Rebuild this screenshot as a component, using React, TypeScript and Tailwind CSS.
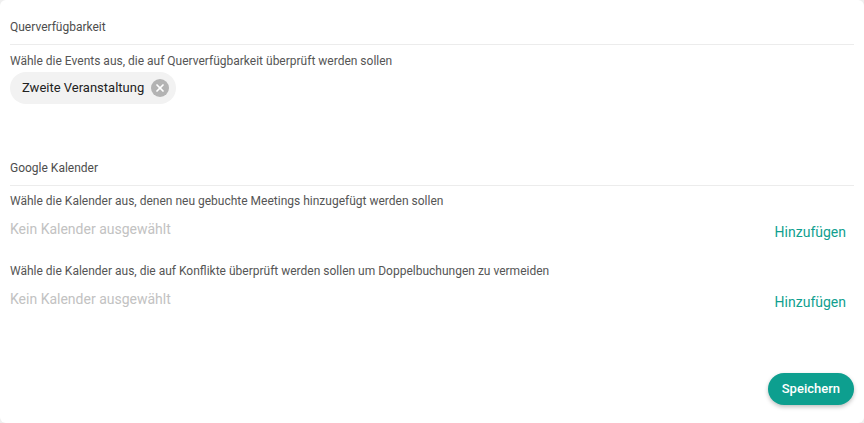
import { X } from 'lucide-react';

function SectionTitle({ children }: { children: string }) {
  return (
    <div className="border-b border-[#ececec] pb-2 text-[12px] leading-[18px] text-[#4d4d4d]">
      {children}
    </div>
  );
}

function CalendarRow({ label }: { label: string }) {
  return (
    <>
      <div className="text-[12px] leading-[16px] text-[#555]">{label}</div>
      <div className="mt-[10px] flex items-start justify-between">
        <span className="text-[14px] leading-[20px] text-[#c2c2c2]">Kein Kalender ausgewählt</span>
        <button className="mt-[3px] px-2 text-[14px] leading-[20px] text-[#0f9f8f]">Hinzufügen</button>
      </div>
    </>
  );
}

export default function App() {
  return (
    <div className="h-[423px] w-[864px] bg-[#efefef] font-['Roboto',sans-serif]">
      <div className="flex h-full flex-col rounded-md bg-white px-[10px] pt-[18px]">
        <SectionTitle>Querverfügbarkeit</SectionTitle>
        <div className="mt-[8px] text-[12px] leading-[16px] text-[#555]">
          Wähle die Events aus, die auf Querverfügbarkeit überprüft werden sollen
        </div>
        <div className="mt-[3px] flex">
          <div className="flex h-8 items-center gap-[7px] rounded-full bg-[#f2f2f2] pl-3 pr-[7px] text-[13px] text-[#222]">
            Zweite Veranstaltung
            <span className="flex h-[18px] w-[18px] items-center justify-center rounded-full bg-[#b3b3b3]">
              <X className="h-3 w-3 text-white" strokeWidth={3.5} />
            </span>
          </div>
        </div>

        <div className="mt-[55px]">
          <SectionTitle>Google Kalender</SectionTitle>
        </div>
        <div className="mt-[7px]">
          <CalendarRow label="Wähle die Kalender aus, denen neu gebuchte Meetings hinzugefügt werden sollen" />
        </div>
        <div className="mt-[21px]">
          <CalendarRow label="Wähle die Kalender aus, die auf Konflikte überprüft werden sollen um Doppelbuchungen zu vermeiden" />
        </div>

        <div className="mt-[61px] flex justify-end">
          <button className="h-8 rounded-full bg-[#0d9f8f] px-[14px] text-[13px] font-medium text-white shadow-[0_2px_4px_rgba(0,0,0,0.25)]">
            Speichern
          </button>
        </div>
      </div>
    </div>
  );
}
